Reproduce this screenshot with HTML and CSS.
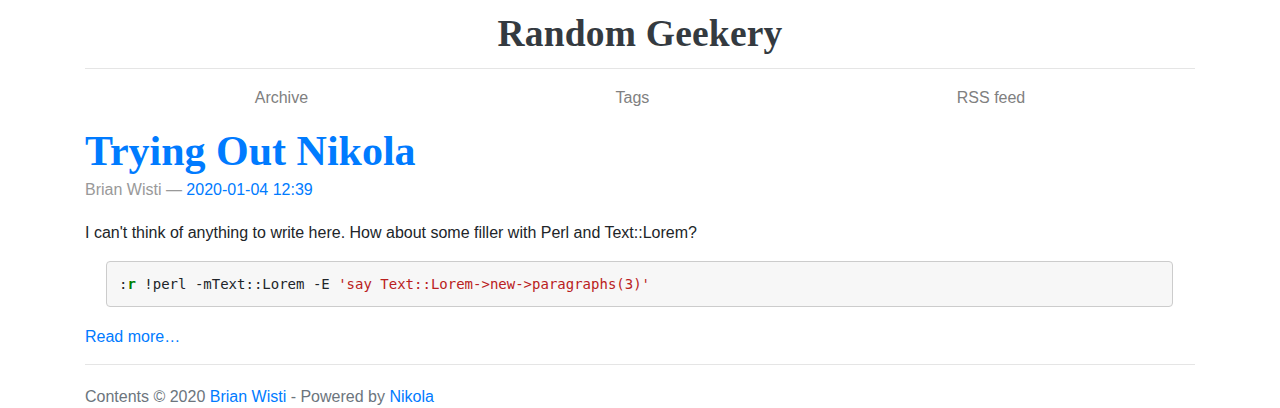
FILE: index.html
```html
<!DOCTYPE html>
<html lang="en">
<head>
<meta charset="utf-8">
<title>Random Geekery</title>
<link rel="stylesheet" href="styles.css">
</head>
<body>
<div class="container">
  <header class="blog-header">
    <a class="blog-header-logo" href="#">Random Geekery</a>
  </header>
  <nav class="site-nav">
    <a class="nav-link" href="#">Archive</a>
    <a class="nav-link" href="#">Tags</a>
    <a class="nav-link" href="#">RSS feed</a>
  </nav>
  <main>
    <article class="post">
      <h1 class="post-title"><a href="#">Trying Out Nikola</a></h1>
      <div class="post-meta">Brian Wisti — <a href="#">2020-01-04 12:39</a></div>
      <p class="post-text">I can't think of anything to write here. How about some filler with Perl and Text::Lorem?</p>
      <pre class="code"><span class="p">:</span><span class="k">r</span> !perl -mText::Lorem -E <span class="s">'say Text::Lorem-&gt;new-&gt;paragraphs(3)'</span></pre>
      <p class="more"><a href="#">Read more…</a></p>
    </article>
  </main>
  <footer class="site-footer">
    Contents © 2020 <a href="#">Brian Wisti</a> - Powered by <a href="#">Nikola</a>
  </footer>
</div>
</body>
</html>
```

FILE: styles.css
```css
* { box-sizing: border-box; }
html, body { margin: 0; padding: 0; background: #fff; }
body {
  font-family: "Liberation Sans", Arial, sans-serif;
  font-size: 16px;
  line-height: 1.5;
  color: #212529;
}
a { color: #007bff; text-decoration: none; }

.container {
  width: 1110px;
  margin: 0 auto;
}

.blog-header {
  padding: 12px 0 13px;
  border-bottom: 1px solid #e5e5e5;
  text-align: center;
}
.blog-header-logo {
  font-family: "Liberation Serif", "Times New Roman", serif;
  font-weight: 700;
  font-size: 37.5px;
  line-height: 43px;
  color: #343a40;
  letter-spacing: 0.2px;
}

.site-nav {
  display: flex;
  justify-content: space-around;
  padding: 0 16px;
  margin-top: 8px;
}
.site-nav .nav-link {
  padding: 9px 8px 7px;
  color: #808080;
}

.post { margin-top: 10px; }
.post-title {
  margin: 0 0 3px;
  font-family: "Liberation Serif", "Times New Roman", serif;
  font-weight: 700;
  font-size: 42px;
  line-height: 48px;
}
.post-title a { color: #007bff; }
.post-meta { color: #999; }

.post-text { margin: 19px 0 16px; }

.code {
  margin: 0 22px 18px 21px;
  padding: 11px 12px;
  background: #f7f7f7;
  border: 1px solid #ccc;
  border-radius: 4px;
  font-family: "DejaVu Sans Mono", "Liberation Mono", monospace;
  font-size: 14px;
  line-height: 22px;
  color: #212529;
}
.code .k { color: #008000; font-weight: 700; }
.code .s { color: #ba2121; }

.more { margin: 0; }

.site-footer {
  margin-top: 15px;
  border-top: 1px solid #e5e5e5;
  padding-top: 20px;
  color: #6c757d;
}
```
